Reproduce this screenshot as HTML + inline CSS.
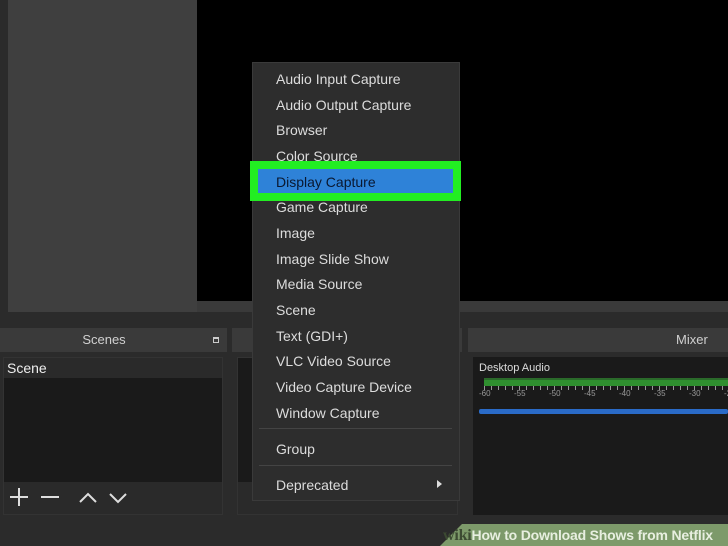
<!DOCTYPE html>
<html><head><style>
*{margin:0;padding:0;box-sizing:border-box}
body{width:728px;height:546px;background:#2b2b2b;position:relative;overflow:hidden;font-family:"Liberation Sans",sans-serif;color:#e0e0e0}
.a{position:absolute}
.mi{position:absolute;left:276px;font-size:14px;color:#dcdcdc;line-height:16px}
</style></head><body>
<div class="a" style="left:8px;top:0;width:189px;height:312px;background:#3f3f3f"></div>
<div class="a" style="left:197px;top:0;width:531px;height:301px;background:#000"></div>
<div class="a" style="left:197px;top:301px;width:531px;height:11px;background:#3a3a3a"></div>

<!-- Scenes -->
<div class="a" style="left:0;top:328px;width:208px;height:24px;background:#3a3a3a;font-size:13px;text-align:center;line-height:24px;color:#d0d0d0">Scenes</div>
<div class="a" style="left:208px;top:328px;width:19px;height:24px;background:#3a3a3a"></div>
<div class="a" style="left:213px;top:337px;width:6px;height:6px;border:1px solid #ccc;border-top-width:2px"></div>
<div class="a" style="left:3px;top:357px;width:220px;height:158px;background:#1a1a1a;border:1px solid #333"></div>
<div class="a" style="left:4px;top:358px;width:218px;height:20px;background:#2a2a2a;font-size:14px;line-height:20px;padding-left:3px;color:#eee">Scene</div>
<div class="a" style="left:4px;top:482px;width:218px;height:32px;background:#2a2a2a"></div>
<svg class="a" style="left:0;top:480px" width="227" height="34"><g stroke="#ddd" stroke-width="2" fill="none"><path d="M10 17h18M19 8v18"/><path d="M41 17h18"/><path d="M80 22l8-8 8 8"/><path d="M110 14l8 8 8-8"/></g></svg>

<!-- Sources -->
<div class="a" style="left:232px;top:328px;width:230px;height:24px;background:#3a3a3a"></div>
<div class="a" style="left:237px;top:357px;width:221px;height:158px;background:#1a1a1a;border:1px solid #333"></div>
<div class="a" style="left:238px;top:482px;width:219px;height:32px;background:#2a2a2a"></div>

<!-- Mixer -->
<div class="a" style="left:468px;top:328px;width:260px;height:24px;background:#3a3a3a;font-size:13px;line-height:24px;color:#d0d0d0"><span style="position:absolute;left:208px">Mixer</span></div>
<div class="a" style="left:473px;top:357px;width:255px;height:158px;background:#1a1a1a"></div>
<div class="a" style="left:479px;top:362px;font-size:11px;color:#ddd">Desktop Audio</div>
<div class="a" style="left:484px;top:378px;width:244px;height:8px;background:#2f8f2f;border-top:2px solid #2a6a2a"></div>
<div class="a" style="left:484px;top:386px;width:244px;height:4px;background:repeating-linear-gradient(90deg,#999 0 1px,transparent 1px 7px)"></div>
<div class="a" style="left:479px;top:389px;width:250px;font-size:8px;color:#999;word-spacing:0">
<span class="a" style="left:0">-60</span><span class="a" style="left:35px">-55</span><span class="a" style="left:70px">-50</span><span class="a" style="left:105px">-45</span><span class="a" style="left:140px">-40</span><span class="a" style="left:175px">-35</span><span class="a" style="left:210px">-30</span><span class="a" style="left:245px">-2</span></div>
<div class="a" style="left:479px;top:409px;width:249px;height:5px;background:#2a6bc8;border-radius:2px"></div>

<!-- Menu -->
<div class="a" style="left:252px;top:62px;width:208px;height:439px;background:#2d2d2d;border:1px solid #3a3a3a"></div>
<div class="a" style="left:250px;top:161px;width:211px;height:40px;background:#22ee22"></div>
<div class="a" style="left:258px;top:169px;width:195px;height:24px;background:#2e82d8"></div>
<div class="mi" style="top:71px">Audio Input Capture</div>
<div class="mi" style="top:97px">Audio Output Capture</div>
<div class="mi" style="top:122px">Browser</div>
<div class="mi" style="top:148px">Color Source</div>
<div class="mi" style="top:174px;color:#0a1830">Display Capture</div>
<div class="mi" style="top:199px">Game Capture</div>
<div class="mi" style="top:225px">Image</div>
<div class="mi" style="top:251px">Image Slide Show</div>
<div class="mi" style="top:276px">Media Source</div>
<div class="mi" style="top:302px">Scene</div>
<div class="mi" style="top:328px">Text (GDI+)</div>
<div class="mi" style="top:353px">VLC Video Source</div>
<div class="mi" style="top:379px">Video Capture Device</div>
<div class="mi" style="top:405px">Window Capture</div>
<div class="a" style="left:259px;top:428px;width:193px;height:1px;background:#444"></div>
<div class="mi" style="top:441px">Group</div>
<div class="a" style="left:259px;top:465px;width:193px;height:1px;background:#444"></div>
<div class="mi" style="top:477px">Deprecated</div>
<div class="a" style="left:437px;top:480px;width:0;height:0;border-left:5px solid #ddd;border-top:4px solid transparent;border-bottom:4px solid transparent"></div>

<!-- wikiHow -->
<div class="a" style="left:440px;top:524px;width:288px;height:22px;background:#7d9a6a;clip-path:polygon(22px 0,100% 0,100% 100%,0 100%)"></div>
<div class="a" style="left:443px;top:526px;font-size:14px;font-weight:bold;white-space:nowrap;line-height:18px;letter-spacing:-0.2px"><span style="font-family:'Liberation Serif',serif;color:#3c4a32;font-size:16px">wiki</span><span style="color:#e8efe0">How to Download Shows from Netflix</span></div>
</body></html>
